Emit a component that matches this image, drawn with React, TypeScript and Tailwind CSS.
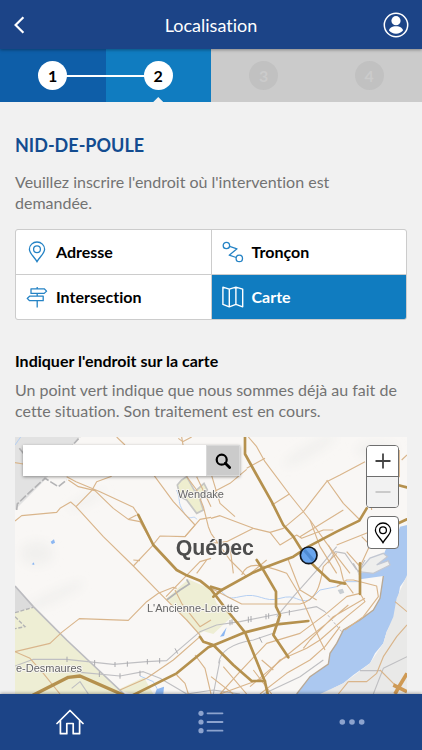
import type { ReactNode } from "react";

function Road({ d, w = 3.4 }: { d: string; w?: number }) {
  return <path d={d} fill="none" stroke="#d9b58b" strokeWidth={w} strokeLinejoin="round" />;
}

function Highway({ d, w = 8 }: { d: string; w?: number }) {
  return (
    <path d={d} fill="none" stroke="#b5914e" strokeWidth={w} strokeLinejoin="round" strokeLinecap="round" />
  );
}

function Rail({ d }: { d: string }) {
  return <path d={d} fill="none" stroke="#bfbfc2" strokeWidth={3.4} strokeLinejoin="round" />;
}

function MapCanvas() {
  return (
    <svg
      viewBox="45 21 1176 771"
      preserveAspectRatio="xMidYMin slice"
      className="absolute inset-0 h-full w-full"
      role="img"
      aria-label="Carte de Québec"
    >
      <defs>
        <filter id="soft" x="-50%" y="-50%" width="200%" height="200%">
          <feGaussianBlur stdDeviation="14" />
        </filter>
      </defs>
      <rect x="45" y="21" width="1176" height="771" fill="#f9f7f5" />

      {/* relief */}
      <g fill="#f1f0ee" filter="url(#soft)">
        <ellipse cx="110" cy="370" rx="50" ry="36" />
        <ellipse cx="160" cy="500" rx="100" ry="16" transform="rotate(-25 160 500)" />
        <ellipse cx="260" cy="210" rx="60" ry="12" transform="rotate(-25 260 210)" />
        <ellipse cx="930" cy="60" rx="90" ry="18" transform="rotate(-30 930 60)" />
        <ellipse cx="1130" cy="60" rx="60" ry="24" />
      </g>

      {/* neighbouring territories */}
      <path d="M45 21H240L205 60L150 130L140 145L45 240Z" fill="#e2e2e2" />
      <path d="M45 468L100 530L50 548V600H45Z" fill="#dcdcdc" />
      <path d="M45 548L100 532L205 634L372 792H45Z" fill="#eeeed4" />
      <path d="M400 792L352 780L432 742L460 792Z" fill="#eeeed4" />
      <path d="M545 150L560 140L585 185L612 160L622 180L600 210L610 240L590 250L560 210L540 200L532 165Z" fill="#eeeecf" stroke="#c6c6c4" strokeWidth="5" />
      <path d="M498 506L565 448L633 478V590L598 612L530 536Z" fill="#eeeed4" />
      <path d="M633 480L650 520L700 556L640 612L598 600Z" fill="#eeeed4" />

      {/* river */}
      <path
        d="M1221 285L1200 290L1190 318L1170 330L1130 420L1075 430L1080 448L1150 438L1140 505L1120 540L1080 570L1030 600L1010 640L990 670L985 702L930 740L890 792H975L1000 775L1030 760L1060 735L1110 700L1125 670L1150 640L1160 605L1185 560L1200 470L1221 440Z"
        fill="#abc8f0"
      />
      <path
        d="M1221 435L1190 505L1180 560L1160 605L1150 640L1130 670L1110 700L1060 738L1030 760L960 792H1221Z"
        fill="#e9e9e8"
      />
      <path
        d="M1150 438L1140 505L1120 540L1080 570L1030 600L1010 640L990 670L985 702L930 740L890 792"
        fill="none"
        stroke="#b9a995"
        strokeWidth="4"
      />
      <path
        d="M1075 425L1110 384L1150 370L1162 380L1130 405L1165 392L1170 405L1120 430Z"
        fill="#eeeeed"
        stroke="#c2c7d2"
        strokeWidth="4"
      />

      {/* streams */}
      <g fill="none" stroke="#b5cff2" strokeWidth="3">
        <path d="M45 45L62 21" />
        <path d="M530 180C545 220 530 210 550 245S580 250 590 268" />
        <path d="M633 475C690 480 660 515 720 500S790 520 840 505S890 520 930 510L960 480L1010 470L1040 455H1080" />
        <path d="M420 738L460 755L480 792" />
      </g>
      <g fill="#8cb7f2">
        <path d="M152 335L162 328L165 338L156 343Z" />
        <path d="M95 403L102 397L103 405Z" />
        <path d="M470 778L492 770L490 792H465Z" />
        <path d="M660 620L680 592L672 618Z" />
      </g>
      <path d="M1013 480L1028 476L1033 488L1020 493Z" fill="#c8cdd2" />

      {/* boundaries */}
      <g fill="none" stroke="#b3b3b5">
        <path d="M50 240L52 222L80 195L135 145L175 170L200 150" strokeWidth="5" strokeDasharray="24 6" />
        <path d="M205 60L240 21M58 55L72 72" strokeWidth="5" strokeDasharray="20 6" />
        <path d="M45 468L100 530L200 630L372 792" strokeWidth="5" stroke="#bcbcc0" />
        <path d="M45 548L100 532M45 560L75 590L45 596" strokeWidth="4" strokeDasharray="12 5" />
        <path d="M500 510L540 480L568 462L560 448" strokeWidth="5" />
      </g>

      {/* railways */}
      <Rail d="M45 708L100 688L200 688L340 703L440 695L500 692L530 665L600 605L650 585L720 575L850 549L950 530L975 545" />
      <path d="M975 545L1025 605" fill="none" stroke="#b9b9bd" strokeWidth="3" strokeDasharray="8 6" />
      <Rail d="M180 722L250 728L360 738L430 725L480 745L540 780L560 792" />
      <Rail d="M830 560L880 500L960 410L1010 350" />
      <Rail d="M656 700C660 660 700 640 760 630L820 610L840 570" />
      <Rail d="M640 792L660 690M790 792L900 740L970 690" />
      <Rail d="M215 775L240 755L265 792M560 792L640 780L720 792" />
      <Rail d="M985 400L1005 365L1035 370L1070 420M1060 400L1075 425L1095 390" />
      <Rail d="M1221 680L1150 715L1120 792M1080 722H1140" />
      <g stroke="#a9a9ad" strokeWidth="3">
        <path d="M201 680V696M284 690V707M345 696V711M382 694V710M442 687V703M479 684V700M525 655L533 671M298 725V741M360 730V746M420 722V738M745 560V578M753 558V576M798 552V568M806 550V566M868 540V556M690 570V586M696 568V584M778 622L786 638" />
      </g>

      {/* local roads */}
      <Road d="M45 273L65 257L170 247L180 235L212 216L228 230L275 182L290 155L335 139" />
      <Road d="M45 98L70 102M200 140L228 155L300 185L400 232L415 255M205 150L235 170L285 182L340 235L385 268L410 255M385 268L420 275L460 345" />
      <Road d="M228 230L310 320L400 408L480 490L560 570L600 615" />
      <Road d="M400 408L455 350L480 318L555 320L600 268L633 262" />
      <Road d="M462 136L520 215L585 285L555 320M545 21L550 50M535 25L548 35L575 21M350 21L375 45" />
      <Road d="M560 140L590 180L610 230L625 290L633 310M590 140L633 230" />
      <Road d="M45 665L150 640L185 607L238 566L385 571L440 515L475 490L520 472L530 475" />
      <Road d="M45 665L90 685L130 730L180 792M360 780L440 745L520 690L600 620M530 735L555 760L565 792M585 675L615 715L633 792M400 390L420 392" />
      <Road d="M525 480L545 520L600 590L633 570M498 500L600 395L633 385M590 430L620 390" />
      <Road d="M745 21L770 50L795 95L870 195L930 270L980 340L1050 430" />
      <Road d="M815 226L868 192M740 115L795 85M633 190L690 160L740 118M633 130L660 220L705 260" />
      <Road d="M633 265L660 257L760 295L810 307L850 295L910 245L980 155L1020 135L1095 95" />
      <Road d="M980 150L1030 220L1080 270M1198 60V140L1180 155M1205 90L1221 75M1100 95L1115 240" />
      <Road d="M633 340L680 335L760 295M810 307L840 345L890 315L905 325L970 300L1000 300" />
      <Road d="M930 270L960 350L1010 430M633 310L690 390L740 440L800 390M900 320L1030 240" />
      <Road d="M725 435C740 395 780 400 860 430L905 505L960 630L975 660M700 430L690 350M865 390L900 480L950 510" />
      <Road d="M633 475L725 522H900C950 510 960 470 970 410L1010 370" />
      <Road d="M985 345L1020 410L1030 450L1060 490M1010 470L1040 450L1060 450L1130 468L1135 500L1090 560L1035 600" />
      <Road d="M660 792L720 725L800 640L900 610L980 550L1040 500L1080 490L1095 515L1040 560L960 630L920 655L840 690L790 745L660 792" />
      <Road d="M1095 505L1000 560L930 630L910 655M1045 525L980 580L880 660L820 710L750 770" />
      <Road d="M780 792L860 730L930 690L975 650L1020 590M785 690L820 720M760 720L815 792M670 710L740 792M633 740L700 792" />
      <Road d="M1221 585L1190 620L1150 680L1130 730L1100 755H1045M1221 545L1185 515M1140 720L1195 775M1045 755L1015 792" />
      <Road d="M1085 320L1110 345L1080 410M1040 365L1080 410M1010 345L1110 305" />

      {/* highways */}
      <Highway d="M415 255L460 345L530 420L560 436L600 452L633 478L680 540L705 570L735 607L795 755L803 792" />
      <Highway d="M735 21V72L770 135L815 215L850 285L880 320L905 360L930 395L950 415L990 452L1035 461" />
      <Highway d="M1221 268L1195 280M1193 165L1221 172M1100 235L1078 272L1010 305L925 350L880 380L800 410L755 430L665 480L640 500" />
      <Highway d="M665 480L633 470M770 390L790 420L828 485L828 530L840 555L820 615L865 682" />
      <Highway d="M925 573L830 583L735 607L650 642L625 652L530 730L400 795M600 620L610 635L640 645L700 705L755 753H795" />
      <Highway d="M100 795L205 742L240 738L370 795" w={10} />
      <Highway d="M1080 400L1080 492" />
      <path d="M1221 730L1200 765L1185 792M1180 765L1221 785" fill="none" stroke="#cf9a55" strokeWidth="11" />

      {/* place names */}
      <g
        fill="#666666"
        stroke="#f9f7f5"
        strokeWidth="5"
        paintOrder="stroke"
        style={{ fontFamily: '"Liberation Sans", Arial, sans-serif' }}
      >
        <text x="533" y="205" fontSize="33">Wendake</text>
        <text x="441" y="545" fontSize="33">L'Ancienne-Lorette</text>
        <text x="48" y="726" fontSize="33">e-Desmaures</text>
        <text x="527" y="375" fontSize="64" fontWeight="bold" fill="#4d4d4d">Québec</text>
      </g>

      <circle cx="926" cy="376" r="25" fill="#69a5ee" stroke="#10151d" strokeWidth="5" />
      <path d="M913 360L940 392" stroke="#4f8bd3" strokeWidth="10" />
    </svg>
  );
}

function PinIcon({ className }: { className: string }) {
  return (
    <svg viewBox="0 0 18 22" fill="none" stroke="currentColor" className={className} aria-hidden="true">
      <path d="M9 20.6C7 16.8 1.4 12.4 1.4 8.2a7.6 7.2 0 0 1 15.2 0C16.6 12.4 11 16.8 9 20.6Z" strokeWidth="1.3" />
      <circle cx="9" cy="8.3" r="3.4" strokeWidth="1.3" />
    </svg>
  );
}

function SegmentIcon() {
  return (
    <svg viewBox="0 0 22 22" fill="none" stroke="currentColor" strokeWidth="1.3" className="size-[22px]" aria-hidden="true">
      <circle cx="4.4" cy="4.5" r="3.2" />
      <circle cx="17.3" cy="17.4" r="3.2" />
      <path d="M7.6 5.4L15 7.8L7.2 14.2L14.2 16.5" strokeLinejoin="round" />
    </svg>
  );
}

function SignpostIcon() {
  return (
    <svg viewBox="0 0 22 22" fill="none" stroke="currentColor" strokeWidth="1.3" strokeLinejoin="round" className="size-[22px]" aria-hidden="true">
      <path d="M5 2.8H18.2L20.6 5.1L18.2 7.4H5ZM17.2 10.2H3.6L1.2 12.4L3.6 14.7H17.2ZM11.2 1V2.8M11.2 7.4V10.2M11.2 14.7V21.4" />
    </svg>
  );
}

function FoldedMapIcon() {
  return (
    <svg viewBox="0 0 22 22" fill="none" stroke="currentColor" strokeWidth="1.4" strokeLinejoin="round" className="size-[22px]" aria-hidden="true">
      <path d="M.9 1.2L7.3 3.2L13.9 1.2L20.7 3.2V20.8L13.9 18.4L7.3 20.8L.9 18.4ZM7.3 3.2V20.8M13.9 1.2V18.4" />
    </svg>
  );
}

function Choice({ icon, label, className }: { icon: ReactNode; label: string; className: string }) {
  return (
    <button type="button" className={`flex h-11 items-center gap-2 pl-[10px] text-base font-bold ${className}`}>
      <span className="flex w-[22px] justify-center">{icon}</span>
      {label}
    </button>
  );
}

function Step({ n, className, dot, children }: { n: number; className: string; dot: string; children?: ReactNode }) {
  return (
    <li className={`relative flex flex-1 items-center justify-center ${className}`}>
      {children}
      <span className={`relative z-[1] flex size-[29px] items-center justify-center rounded-full text-base font-bold ${dot}`}>
        {n}
      </span>
    </li>
  );
}

export default function App() {
  return (
    <div className="flex h-dvh flex-col bg-[#f1f1f1] font-[Lato,'Open_Sans',sans-serif] text-black [font-variant-ligatures:no-common-ligatures]">
      <header className="relative z-10 flex h-[49px] shrink-0 items-center justify-between bg-[#1c4487] px-[13px] text-white shadow-[0_1px_3px_rgba(0,0,0,0.35)]">
        <button type="button" aria-label="Retour" className="flex w-[26px]">
          <svg viewBox="0 0 12 18" fill="none" stroke="currentColor" strokeWidth="2.2" className="h-[18px] w-3" aria-hidden="true">
            <path d="M10.4 1.2L2.6 9L10.4 16.8" />
          </svg>
        </button>
        <h1 className="text-lg leading-6">Localisation</h1>
        <button type="button" aria-label="Mon compte">
          <svg viewBox="0 0 26 26" className="size-[26px]" aria-hidden="true">
            <circle cx="13" cy="13" r="11.7" fill="none" stroke="currentColor" strokeWidth="1.5" />
            <circle cx="13" cy="8.7" r="4.6" fill="currentColor" />
            <path d="M13 14.3c4 0 7 2 7 4.3c-1.6 2-4 3.2-7 3.2s-5.4-1.2-7-3.2c0-2.3 3-4.3 7-4.3Z" fill="currentColor" />
          </svg>
        </button>
      </header>

      <ol className="flex h-[53px] shrink-0">
        <Step n={1} className="bg-[#0e5ea8]" dot="bg-white" />
        <Step n={2} className="bg-[#107cc0]" dot="bg-white">
          <span className="absolute right-1/2 h-0.5 w-full bg-white" />
          <span className="absolute bottom-0 h-[5px] w-[10px] bg-[#f1f1f1] [clip-path:polygon(50%_0,100%_100%,0_100%)]" />
        </Step>
        <Step n={3} className="bg-[#cbcbcb]" dot="bg-[#c1c1c1] text-[#cbcbcb]" />
        <Step n={4} className="bg-[#cbcbcb]" dot="bg-[#c1c1c1] text-[#cbcbcb]" />
      </ol>

      <main className="flex min-h-0 flex-1 flex-col px-[15px] pt-[31px]">
        <h2 className="text-lg leading-6 font-bold text-[#134c90]">NID-DE-POULE</h2>
        <p className="mt-[14px] text-base leading-[21px] text-[#737373]">
          Veuillez inscrire l'endroit où l'intervention est demandée.
        </p>

        <div className="mt-4 grid shrink-0 grid-cols-2 gap-px overflow-hidden rounded-[3px] border border-[#cccccc] bg-[#cccccc]">
          <Choice icon={<PinIcon className="h-[22px] w-[18px] text-[#2583c5]" />} label="Adresse" className="bg-white" />
          <Choice icon={<span className="text-[#2583c5]"><SegmentIcon /></span>} label="Tronçon" className="bg-white" />
          <Choice icon={<span className="text-[#2583c5]"><SignpostIcon /></span>} label="Intersection" className="bg-white" />
          <Choice icon={<FoldedMapIcon />} label="Carte" className="bg-[#107cc0] text-white" />
        </div>

        <h3 className="mt-[30px] text-base leading-[22px] font-bold">Indiquer l'endroit sur la carte</h3>
        <p className="mt-[7px] text-base leading-[21px] text-[#737373]">
          Un point vert indique que nous sommes déjà au fait de cette situation. Son traitement est en cours.
        </p>

        <section className="relative mt-4 flex min-h-0 flex-1 items-start justify-between overflow-hidden">
          <MapCanvas />
          <form className="relative mt-2 ml-2 flex h-[31px] w-[217px] bg-white shadow-[0_1px_3px_rgba(0,0,0,0.4)]">
            <input type="text" aria-label="Rechercher une adresse" className="min-w-0 flex-1 bg-white px-2 text-sm outline-none" />
            <button type="button" aria-label="Rechercher" className="flex w-[34px] items-center justify-center border border-[#d9d9d9] bg-[#cbcbcb]">
              <svg viewBox="0 0 16 16" fill="none" stroke="black" className="size-4" aria-hidden="true">
                <circle cx="6.7" cy="6.7" r="5" strokeWidth="2.2" />
                <path d="M10.3 10.3L14.6 14.6" strokeWidth="2.8" strokeLinecap="round" />
              </svg>
            </button>
          </form>
          <div className="relative mt-2 mr-2 flex w-[33px] flex-col gap-2">
            <div className="flex flex-col overflow-hidden rounded-[4px] border border-[#6e6e6e]">
              <button type="button" aria-label="Zoom avant" className="flex h-[30px] items-center justify-center bg-white">
                <svg viewBox="0 0 16 16" stroke="#444444" strokeWidth="1.8" className="size-4" aria-hidden="true">
                  <path d="M8 .5V15.5M.5 8H15.5" />
                </svg>
              </button>
              <button type="button" aria-label="Zoom arrière" disabled className="flex h-[31px] items-center justify-center border-t border-[#6e6e6e] bg-[#f2f2f2]">
                <svg viewBox="0 0 16 16" stroke="#bcbcbc" strokeWidth="1.6" className="size-4" aria-hidden="true">
                  <path d="M.5 8H15.5" />
                </svg>
              </button>
            </div>
            <button type="button" aria-label="Ma position" className="ml-px flex h-[33px] items-center justify-center rounded-[4px] border border-[#6e6e6e] bg-white">
              <PinIcon className="h-[22px] w-[18px]" />
            </button>
          </div>
        </section>
      </main>

      <nav className="z-10 grid h-14 shrink-0 grid-cols-3 bg-[#1c4487] text-white shadow-[0_-1px_3px_rgba(0,0,0,0.3)]">
        <a href="#accueil" aria-label="Accueil" className="flex items-center justify-center">
          <svg viewBox="0 0 28 26" fill="none" stroke="currentColor" strokeWidth="1.7" strokeLinejoin="round" strokeLinecap="round" className="h-[26px] w-7" aria-hidden="true">
            <path d="M1 14.5L14 1.5L27 14.5M4.4 11.5V24.7H10.8V14.5H17.2V24.7H23.6V11.5" />
          </svg>
        </a>
        <a href="#demandes" aria-label="Mes demandes" className="flex items-center justify-center text-[#8ca3ce]">
          <svg viewBox="0 0 26 24" fill="currentColor" className="h-6 w-[26px]" aria-hidden="true">
            <circle cx="3" cy="3.3" r="2.6" />
            <circle cx="3" cy="12" r="2.6" />
            <circle cx="3" cy="20.7" r="2.6" />
            <path d="M9.5 3.3H24.5M9.5 12H24.5M9.5 20.7H24.5" stroke="currentColor" strokeWidth="1.8" strokeLinecap="round" />
          </svg>
        </a>
        <a href="#plus" aria-label="Plus" className="flex items-center justify-center text-[#8ca3ce]">
          <svg viewBox="0 0 26 6" fill="currentColor" className="h-[6px] w-[26px]" aria-hidden="true">
            <circle cx="3.3" cy="3" r="2.8" />
            <circle cx="13" cy="3" r="2.8" />
            <circle cx="22.7" cy="3" r="2.8" />
          </svg>
        </a>
      </nav>
    </div>
  );
}
